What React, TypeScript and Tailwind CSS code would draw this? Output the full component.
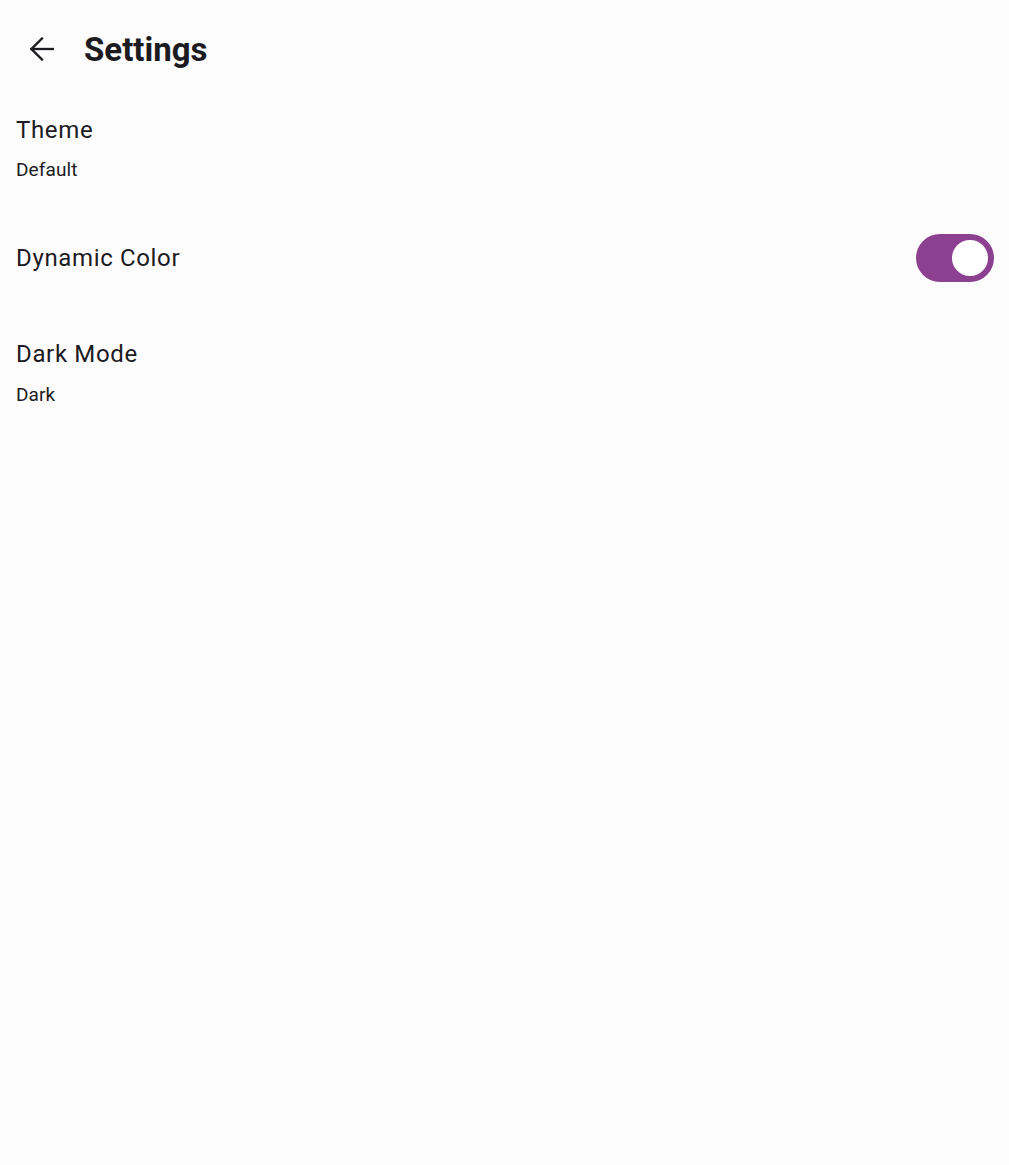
import React, { useState } from 'react';

const SettingRow = ({ title, value, gap }: { title: string; value: string; gap: string }) => (
  <div className="flex flex-col px-4">
    <div className="text-[24px] leading-[32px] tracking-[0.65px] text-[#1c1b1f]">{title}</div>
    <div className={`${gap} text-[19px] leading-[28px] tracking-[0.1px] text-[#1c1b1f]`}>{value}</div>
  </div>
);

export default function App() {
  const [dynamic, setDynamic] = useState(true);

  return (
    <div className="min-h-[1165px] w-full bg-[#fcfcfc] font-['Roboto',sans-serif]">
      <header className="flex h-[97px] items-center">
        <button className="ml-[6px] flex h-[72px] w-[72px] items-center justify-center rounded-full">
          <svg width="24" height="24" viewBox="0 0 24 24" fill="none" stroke="#1c1b1f" strokeWidth="2.3" strokeLinecap="square">
            <path d="M1.5 12H23" />
            <path d="M12 1.5 1.5 12 12 22.5" />
          </svg>
        </button>
        <h1 className="ml-[6px] mt-[2px] text-[33px] font-bold leading-[40px] text-[#1c1b1f]">Settings</h1>
      </header>

      <div className="pt-[17px]">
        <SettingRow title="Theme" value="Default" gap="mt-[10px]" />
      </div>

      <div className="mt-[50px] flex h-[48px] items-center justify-between pl-4 pr-[15px]">
        <div className="text-[24px] leading-[32px] tracking-[0.65px] text-[#1c1b1f]">Dynamic Color</div>
        <button
          onClick={() => setDynamic(!dynamic)}
          className={`flex h-[48px] w-[78px] items-center rounded-full px-[6px] ${dynamic ? 'justify-end bg-[#8b418f]' : 'justify-start bg-[#e7e0ec]'}`}
        >
          <span className="block h-[36px] w-[36px] rounded-full bg-white" />
        </button>
      </div>

      <div className="mt-[56px]">
        <SettingRow title="Dark Mode" value="Dark" gap="mt-[11px]" />
      </div>
    </div>
  );
}
